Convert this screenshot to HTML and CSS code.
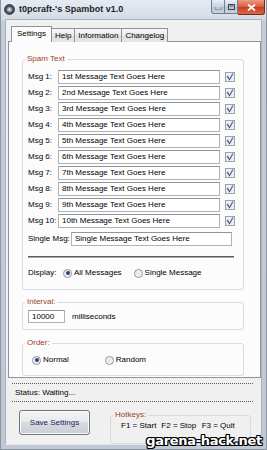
FILE: index.html
```html
<!DOCTYPE html>
<html>
<head>
<meta charset="utf-8">
<link rel="stylesheet" href="styles.css">
</head>
<body>
<div class="window">
  <div class="titlebar">
    <span class="app-icon">
      <svg width="11" height="11" viewBox="0 0 11 11"><circle cx="5.5" cy="5.5" r="5" fill="#4a5160" stroke="#2c3039" stroke-width="0.8"/><circle cx="5.5" cy="5.5" r="2.6" fill="#9aa3b3"/><circle cx="5.5" cy="5.5" r="1.2" fill="#e4e8ee"/></svg>
    </span>
    <span class="title">t0pcraft-'s Spambot v1.0</span>
    <div class="caption-btns">
      <span class="cbtn cmin"><svg width="7" height="3" viewBox="0 0 7 3"><rect x="0" y="0" width="7" height="2" fill="#fff" stroke="#3b4350" stroke-width="0.6"/></svg></span>
      <span class="cbtn cmax"><svg width="7" height="6" viewBox="0 0 7 6"><rect x="0.5" y="0.5" width="6" height="5" fill="none" stroke="#3b4350" stroke-width="1"/><rect x="1.5" y="1.5" width="4" height="1" fill="#3b4350"/></svg></span>
      <span class="cbtn cclose"><svg width="9" height="7" viewBox="0 0 9 7"><path d="M1 0.5 L8 6.5 M8 0.5 L1 6.5" stroke="#fff" stroke-width="1.8"/></svg></span>
    </div>
  </div>
  <div class="client">
    <div class="tabs">
      <span class="tab active">Settings</span>
      <span class="tab">Help</span>
      <span class="tab">Information</span>
      <span class="tab">Changelog</span>
    </div>
    <div class="panel">
      <fieldset class="group spam">
        <legend>Spam Text</legend>
        <div class="msg-row"><span class="msg-label">Msg 1:</span><span class="textbox msg-box">1st Message Text Goes Here</span><span class="check"></span></div>
        <div class="msg-row"><span class="msg-label">Msg 2:</span><span class="textbox msg-box">2nd Message Text Goes Here</span><span class="check"></span></div>
        <div class="msg-row"><span class="msg-label">Msg 3:</span><span class="textbox msg-box">3rd Message Text Goes Here</span><span class="check"></span></div>
        <div class="msg-row"><span class="msg-label">Msg 4:</span><span class="textbox msg-box">4th Message Text Goes Here</span><span class="check"></span></div>
        <div class="msg-row"><span class="msg-label">Msg 5:</span><span class="textbox msg-box">5th Message Text Goes Here</span><span class="check"></span></div>
        <div class="msg-row"><span class="msg-label">Msg 6:</span><span class="textbox msg-box">6th Message Text Goes Here</span><span class="check"></span></div>
        <div class="msg-row"><span class="msg-label">Msg 7:</span><span class="textbox msg-box">7th Message Text Goes Here</span><span class="check"></span></div>
        <div class="msg-row"><span class="msg-label">Msg 8:</span><span class="textbox msg-box">8th Message Text Goes Here</span><span class="check"></span></div>
        <div class="msg-row"><span class="msg-label">Msg 9:</span><span class="textbox msg-box">9th Message Text Goes Here</span><span class="check"></span></div>
        <div class="msg-row"><span class="msg-label">Msg 10:</span><span class="textbox msg-box">10th Message Text Goes Here</span><span class="check"></span></div>
        <div class="single-row"><span class="single-label">Single Msg:</span><span class="textbox single-box">Single Message Text Goes Here</span></div>
        <div class="separator"></div>
        <div class="display-row">
          <span class="display-label">Display:</span>
          <span class="radio-item"><span class="radio on"></span>All Messages</span>
          <span class="radio-item second"><span class="radio"></span>Single Message</span>
        </div>
      </fieldset>
      <fieldset class="group interval">
        <legend>Interval:</legend>
        <div class="interval-row"><span class="textbox interval-box">10000</span><span class="ms">milliseconds</span></div>
      </fieldset>
      <fieldset class="group order">
        <legend>Order:</legend>
        <div class="order-row">
          <span class="radio-item"><span class="radio on"></span>Normal</span>
          <span class="radio-item random"><span class="radio"></span>Random</span>
        </div>
      </fieldset>
    </div>
    <div class="dotted"></div>
    <div class="status">Status: Waiting...</div>
    <div class="dotted"></div>
    <div class="bottom-row">
      <span class="button">Save Settings</span>
      <fieldset class="group hotkeys">
        <legend>Hotkeys:</legend>
        <div class="hotkey-row"><span>F1 = Start</span><span>F2 = Stop</span><span>F3 = Quit</span></div>
      </fieldset>
    </div>
  </div>
  <div class="watermark">garena-hack.net</div>
</div>
</body>
</html>
```
FILE: styles.css
```css
* { box-sizing: border-box; }
html, body { margin: 0; padding: 0; }
body {
  width: 267px;
  height: 450px;
  overflow: hidden;
  font-family: "Liberation Sans", Arial, sans-serif;
  font-size: 8px;
  line-height: 10px;
  color: #000;
  background: #fff;
}
.window {
  position: relative;
  width: 267px;
  height: 450px;
  display: flex;
  flex-direction: column;
  padding: 0 4px 4px;
  background: linear-gradient(#e6ebf1, #d3dbe5 20px, #c3ccd7 21px, #bfc8d3);
  border: 1px solid #8b96a4;
  border-top: none;
}
.titlebar {
  height: 20px;
  display: flex;
  align-items: flex-start;
  margin: 0 -4px;
  padding-left: 3px;
}
.app-icon { margin-top: 4px; width: 11px; height: 11px; display: flex; }
.title {
  margin-left: 4px;
  margin-top: 4px;
  font-size: 9px;
  font-weight: bold;
  color: #1c1f26;
  line-height: 11px;
}
.caption-btns {
  margin-left: auto;
  margin-right: 1px;
  display: flex;
}
.cbtn {
  height: 14px;
  display: flex;
  align-items: center;
  justify-content: center;
  border: 1px solid #6f7d8f;
  border-top: none;
}
.cmin {
  width: 14px;
  border-radius: 0 0 0 3px;
  background: linear-gradient(#e9eef4, #c9d3df 50%, #b6c2d0 51%, #c7d1dd);
  align-items: flex-end;
  padding-bottom: 3px;
}
.cmax {
  width: 13px;
  border-left: none;
  background: linear-gradient(#e9eef4, #c9d3df 50%, #b6c2d0 51%, #c7d1dd);
}
.cclose {
  width: 27px;
  height: 15px;
  border-left: none;
  border-color: #7b2a1c;
  border-radius: 0 0 3px 0;
  background: linear-gradient(#ee9a86, #d9593d 50%, #c73b1d 51%, #dc6a4c);
}
.client {
  flex: 1;
  background: #f0f0f0;
  padding: 6px 0 0 2px;
  display: flex;
  flex-direction: column;
  border: 1px solid #a9b3c0;
  border-bottom-color: #e4e8ee;
}
.tabs {
  display: flex;
  align-items: flex-end;
  height: 16px;
  margin-bottom: -1px;
  padding-left: 3px;
  position: relative;
  z-index: 1;
}
.tab {
  height: 14px;
  padding: 0 3px;
  border: 1px solid #8e929b;
  border-bottom: none;
  margin-left: -1px;
  background: linear-gradient(#f7f7f7, #ebebeb 50%, #dedede 51%, #e6e6e6);
  display: flex;
  align-items: center;
  line-height: 10px;
}
.tab.active {
  height: 16px;
  background: #fcfcfd;
  margin-left: 0;
  margin-right: -1px;
  padding: 0 5px 2px;
  position: relative;
  z-index: 2;
}
.tab.active + .tab { margin-left: 0; }
.panel {
  height: 337px;
  background: #fcfcfd;
  border: 1px solid #8e929b;
  padding: 12px 16px 0 13px;
  display: flex;
  flex-direction: column;
}
.group {
  margin: 0;
  border: 1px solid #d5dbe1;
  border-radius: 3px;
  padding: 0 8px 0 5px;
  min-width: 0;
}
.group legend {
  padding: 0 2px;
  margin-left: -3px;
  color: #9c3f25;
  line-height: 10px;
}
.spam { height: 236px; padding-top: 6px; }
.msg-row {
  display: flex;
  align-items: center;
  height: 14px;
  margin-bottom: 2px;
}
.msg-label { width: 30px; }
.textbox {
  display: flex;
  align-items: center;
  height: 14px;
  background: #fff;
  border: 1px solid #aeb3b9;
  border-top-color: #8f959c;
  padding-left: 3px;
  white-space: nowrap;
  overflow: hidden;
}
.msg-box { width: 162px; }
.check {
  width: 10px;
  height: 10px;
  margin-left: 5px;
  border: 1px solid #9ca3ab;
  background: #eef0f2 url("data:image/svg+xml;utf8,<svg xmlns='http://www.w3.org/2000/svg' width='8' height='8' viewBox='0 0 8 8'><path d='M1 3 L3.5 6.5 L7 0.5' fill='none' stroke='%235567a0' stroke-width='1.3'/></svg>") no-repeat center;
}
.single-row {
  display: flex;
  align-items: center;
  height: 14px;
  margin-top: 4px;
}
.single-label { width: 43px; }
.single-box { width: 161px; }
.separator {
  margin-top: 10px;
  width: 206px;
  height: 2px;
  background: #5c5c5c;
  border-bottom: 1px solid #a8a8a8;
}
.display-row {
  display: flex;
  align-items: center;
  height: 14px;
  margin-top: 8px;
}
.display-label { width: 35px; }
.radio-item { display: flex; align-items: center; }
.radio {
  width: 9px;
  height: 9px;
  border-radius: 50%;
  border: 1px solid #8c929b;
  background: radial-gradient(circle, #e9ebee 40%, #f7f7f7 70%);
  margin-right: 2px;
  display: flex;
  align-items: center;
  justify-content: center;
}
.radio.on::after {
  content: "";
  width: 4px;
  height: 4px;
  border-radius: 50%;
  background: #34407a;
}
.radio-item.second { margin-left: 12px; }
.interval { margin-top: 7px; height: 33px; padding-top: 3px; }
.interval-row { display: flex; align-items: center; height: 13px; }
.interval-box { width: 37px; height: 13px; }
.ms { margin-left: 7px; }
.order { margin-top: 8px; height: 38px; padding-top: 5px; padding-left: 9px; }
.order legend { margin-left: -7px; }
.order-row { display: flex; align-items: center; height: 14px; }
.radio-item.random { margin-left: 36px; }
.dotted {
  margin: 5px 8px 0 4px;
  border-top: 1px dotted #5e5e5e;
}
.status {
  height: 17px;
  padding: 4px 0 0 7px;
}
.dotted + .status + .dotted { margin-top: 0; }
.bottom-row {
  display: flex;
  align-items: flex-start;
  margin-top: 8px;
}
.button {
  margin-left: 11px;
  width: 71px;
  height: 25px;
  border: 1px solid #6f747b;
  border-radius: 3px;
  background: linear-gradient(#f2f2f2, #ebebeb 45%, #d8dbe0 50%, #c9ced6);
  box-shadow: inset 0 0 0 1px #fbfbfb;
  color: #1b2566;
  display: flex;
  align-items: center;
  justify-content: center;
}
.hotkeys {
  margin-left: 20px;
  width: 141px;
  height: 34px;
  padding-top: 1px;
  padding-left: 10px;
}
.hotkeys legend { margin-left: -8px; }
.hotkey-row { display: flex; }
.hotkey-row span { width: 45px; }
.watermark {
  position: absolute;
  right: 4px;
  bottom: 1px;
  font-family: "DejaVu Sans", sans-serif;
  font-weight: bold;
  font-size: 13px;
  line-height: 15px;
  color: #fff;
  letter-spacing: -0.3px;
  text-shadow: 1px 0 0 #000, -1px 0 0 #000, 0 1px 0 #000, 0 -1px 0 #000, 1px 1px 0 #000, -1px -1px 0 #000, 1px -1px 0 #000, -1px 1px 0 #000;
}
```
